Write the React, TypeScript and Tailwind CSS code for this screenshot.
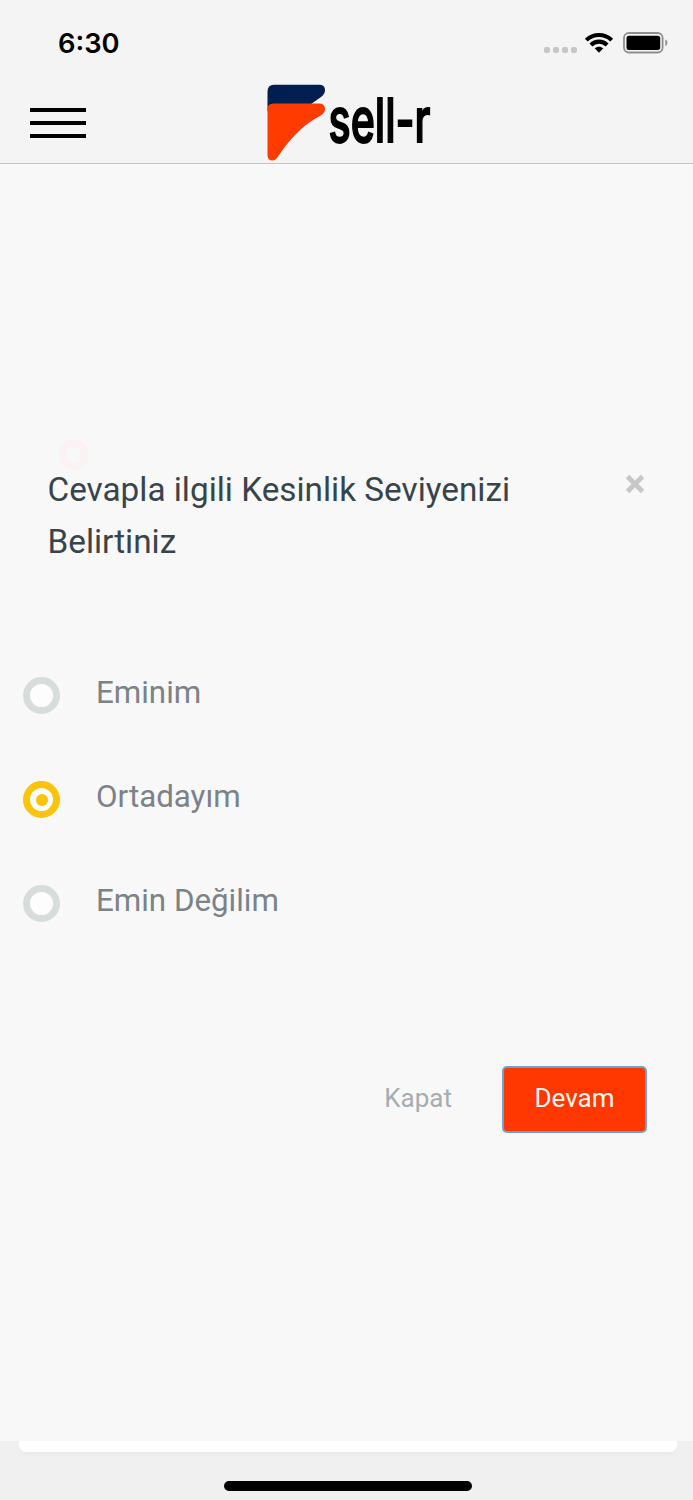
import { useState } from 'react';
import clsx from 'clsx';

// Niveles de certeza que se pueden elegir
const LEVELS = [
  { key: 'sure', label: 'Eminim' },
  { key: 'middle', label: 'Ortadayım' },
  { key: 'unsure', label: 'Emin Değilim' },
];

function StatusBar() {
  return (
    <div className="flex h-[82px] items-start justify-between pl-[58px] pr-[24px] text-black">
      <span className="mt-[23px] font-['Inter',sans-serif] text-[27.3px] leading-[42px] font-semibold">6:30</span>
      <div className="mt-[32px] flex items-start">
        <div className="mt-[15px] flex gap-[3px]">
          {[0, 1, 2, 3].map(dot => (
            <span key={dot} className="size-[6px] rounded-[2px] bg-[#c6c6c6]" />
          ))}
        </div>
        <svg className="mr-[9px] ml-[7px]" width="30" height="22" viewBox="0 0 30 22" fill="none" stroke="#000" strokeWidth="4.1">
          <path d="M2.300 8.100C9.200 1.300 20.800 1.300 27.700 8.100" />
          <path d="M6.900 13C11.400 8.500 18.600 8.500 23.100 13" />
          <path d="M15 20.800l-4.300-4.500c2.400-2.200 6.200-2.200 8.600 0z" fill="#000" stroke="none" />
        </svg>
        <svg width="46" height="22" viewBox="0 0 46 22" fill="none">
          <rect x="1" y="1" width="38.600" height="19.500" rx="5" stroke="#8e8e8e" strokeWidth="1.8" />
          <rect x="3.500" y="3.700" width="33.700" height="14.200" rx="2.500" fill="#000" />
          <path d="M42.300 7.500c2.800 1 2.800 5.500 0 6.500z" fill="#8e8e8e" />
        </svg>
      </div>
    </div>
  );
}

function Logo() {
  return (
    <svg width="170" height="80" viewBox="0 0 170 80" className="overflow-visible">
      <path d="M1.500 26V7Q1.500 -0.200 8 -0.200H53Q59 -0.200 59 5Q59 9 55 12L43 20.500V26Z" fill="#001f50" />
      <path
        d="M1.500 24.500Q1.500 18.500 7.500 18.500H53Q59 18.500 59 24Q59 28 54 31Q32 42 13 70Q10 75.500 6.500 75.500Q1.500 75.500 1.500 70Z"
        fill="#ff3b00"
      />
      <text
        x="62.500"
        y="56.500"
        textLength="102"
        lengthAdjust="spacingAndGlyphs"
        strokeWidth="1.800"
        className="fill-black stroke-black font-['Inter',sans-serif] text-[61px] font-medium"
      >
        sell-r
      </text>
    </svg>
  );
}

function Radio({ checked }: { checked: boolean }) {
  return (
    <span
      className={clsx(
        'flex size-[37px] shrink-0 items-center justify-center rounded-full border-[7px] bg-[#fdfdfd]',
        checked ? 'border-[#fbc30a]' : 'border-[#d7dddb]'
      )}
    >
      {checked && <span className="size-[12px] rounded-full bg-[#fbc30a]" />}
    </span>
  );
}

export default function App() {
  const [selected, setSelected] = useState('middle');

  return (
    <div className="flex h-[1500px] w-[693px] flex-col bg-[#f0f0f0] font-['Roboto',sans-serif]">
      <header className="h-[164px] border-b border-[#c6c6c6] bg-[#f4f4f4]">
        <StatusBar />
        <div className="flex h-[81px] items-start">
          <button aria-label="Menu" className="mt-[25.5px] ml-[30px] flex w-[56px] flex-col gap-[9px]">
            <span className="h-[4px] bg-black" />
            <span className="h-[4px] bg-black" />
            <span className="h-[4px] bg-black" />
          </button>
          <div className="mt-[3px] ml-[180px]">
            <Logo />
          </div>
        </div>
      </header>

      <main className="relative flex h-[1277px] flex-col bg-[#f8f8f8] pt-[300px]">
        {/* Halo tenue sobre el título */}
        <span className="absolute top-[275px] left-[58px] size-[31px] rounded-full border-[8px] border-[#fbf3f3]" />

        <div className="relative flex h-[104px] justify-between pr-[48px] pl-[47.5px]">
          <h1 className="w-[500px] text-[33.3px] leading-[52px] text-[#37444b]">
            Cevapla ilgili Kesinlik Seviyenizi Belirtiniz
          </h1>
          <button aria-label="Close" className="mt-[10px] size-[20px]">
            <svg width="20" height="20" viewBox="0 0 20 20" stroke="#c7c7c7" strokeWidth="4.800">
              <path d="M2.500 2.500L17.500 17.500M17.500 2.500L2.500 17.500" />
            </svg>
          </button>
        </div>

        <div className="mt-[109px] flex flex-col gap-[67px] pl-[23px]">
          {LEVELS.map(level => (
            <button
              key={level.key}
              onClick={() => setSelected(level.key)}
              className="flex h-[37px] items-center text-left"
            >
              <Radio checked={selected === level.key} />
              <span className="ml-[36px] pb-[7px] text-[31.3px] leading-[37px] text-[#7b8288]">{level.label}</span>
            </button>
          ))}
        </div>

        <div className="mt-[144px] flex justify-end pr-[46px]">
          <button className="mr-[50px] pb-[2px] text-[26px] text-[#a5adb2]">Kapat</button>
          <button className="h-[67px] w-[145px] rounded-[5px] border-2 border-[#69a5d2] bg-[#ff3700] pb-[2px] text-[26px] text-[#fff5ef]">
            Devam
          </button>
        </div>
      </main>

      <footer className="flex flex-col items-center pl-[3px]">
        <div className="h-[11px] w-[658px] rounded-b-[7px] bg-white shadow-[0_3px_3px_#ebebeb]" />
        <div className="mt-[29px] h-[10px] w-[248px] rounded-full bg-black" />
      </footer>
    </div>
  );
}
